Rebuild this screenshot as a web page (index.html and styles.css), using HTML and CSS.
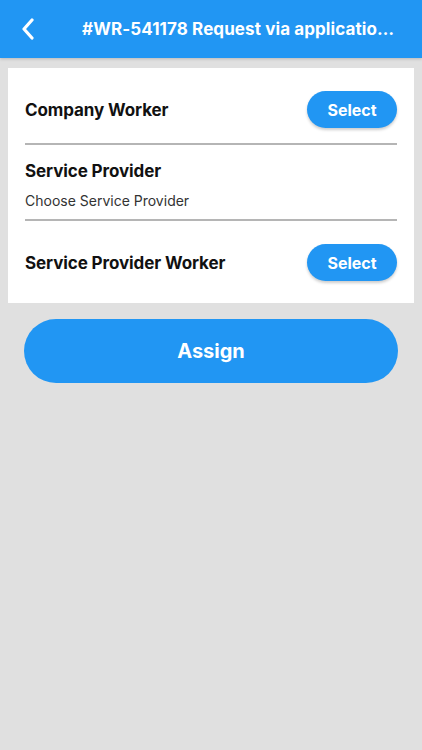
FILE: index.html
```html
<!DOCTYPE html>
<html lang="en">
<head>
  <meta charset="UTF-8">
  <title>Assign</title>
  <link rel="stylesheet" href="styles.css">
</head>
<body>

  <header class="topbar">
    <button class="back" aria-label="Back">
      <svg width="14" height="22" viewBox="0 0 14 22"><path d="M11 2 L3 11 L11 20" fill="none" stroke="#fff" stroke-width="3.2" stroke-linecap="round" stroke-linejoin="round"/></svg>
    </button>
    <h1 class="title">#WR-541178 Request via application form</h1>
  </header>

  <main class="content">
    <section class="card">
      <div class="row row-first">
        <span class="label">Company Worker</span>
        <button class="select">Select</button>
      </div>
      <div class="divider"></div>

      <div class="field">
        <span class="label">Service Provider</span>
        <span class="hint">Choose Service Provider</span>
      </div>
      <div class="divider"></div>

      <div class="row row-last">
        <span class="label">Service Provider Worker</span>
        <button class="select">Select</button>
      </div>
    </section>

    <button class="assign">Assign</button>
  </main>

</body>
</html>
```

FILE: styles.css
```css
* {
  box-sizing: border-box;
}
body {
  margin: 0;
  font-family: Inter, "Noto Sans", sans-serif;
  background: #e0e0e0;
  height: 750px;
  color: #111;
}
.topbar {
  height: 58px;
  background: #2196f3;
  display: flex;
  align-items: center;
  padding: 0 24px 0 21px;
  box-shadow: 0 1px 3px rgba(0,0,0,0.18);
}
.back {
  background: none;
  border: none;
  padding: 0;
  width: 20px;
  height: 24px;
  display: flex;
  align-items: center;
  cursor: pointer;
}
.title {
  margin: 0 0 0 43px;
  font-size: 17px;
  font-weight: 700;
  color: white;
  white-space: nowrap;
  overflow: hidden;
  text-overflow: ellipsis;
  letter-spacing: 0.1px;
}
.content {
  padding: 10px 8px;
}
.card {
  background: white;
  padding: 0 17px;
}
.row {
  display: flex;
  justify-content: space-between;
  align-items: center;
}
.row-first {
  padding: 23px 0 15px;
}
.row-last {
  padding: 23px 0 22px;
}
.label {
  font-size: 17px;
  font-weight: 700;
  letter-spacing: -0.1px;
}
.select {
  width: 90px;
  height: 37px;
  border: none;
  border-radius: 19px;
  background: #2196f3;
  color: white;
  font-family: inherit;
  font-size: 16px;
  font-weight: 700;
  box-shadow: 0 2px 3px rgba(0,0,0,0.2);
  cursor: pointer;
}
.divider {
  height: 2px;
  background: #b5b5b5;
}
.field {
  display: flex;
  flex-direction: column;
  padding: 16px 0 9px;
}
.hint {
  margin-top: 11px;
  font-size: 14px;
  color: #333;
  line-height: 18px;
}
.assign {
  display: block;
  width: calc(100% - 32px);
  margin: 16px auto 0;
  height: 64px;
  border: none;
  border-radius: 32px;
  background: #2196f3;
  color: white;
  font-family: inherit;
  font-size: 20px;
  font-weight: 700;
  cursor: pointer;
}
```
